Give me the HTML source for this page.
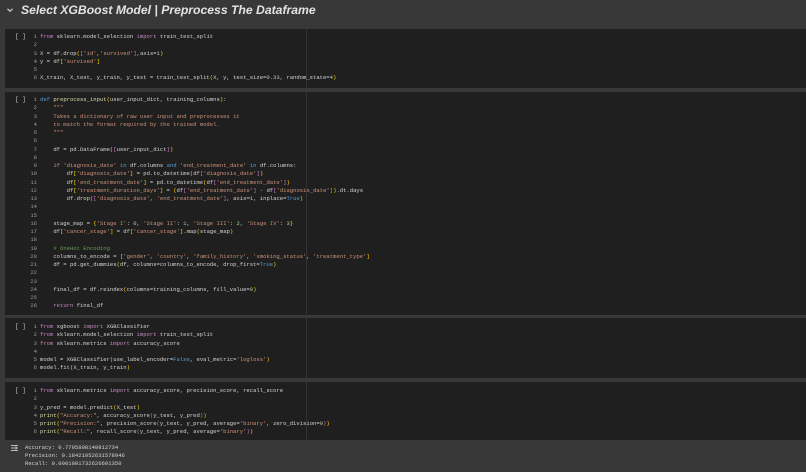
<!DOCTYPE html>
<html><head><meta charset="utf-8"><style>
html,body{margin:0;padding:0;width:806px;height:472px;overflow:hidden;background:#383838;}
body{position:relative;font-family:"Liberation Mono",monospace;}
.title{position:absolute;left:21px;top:3px;font:italic bold 12.2px "Liberation Sans",sans-serif;color:#e3e3e3;white-space:nowrap;}
.chev{position:absolute;left:6px;top:6px;}
.cell{position:absolute;left:5px;right:0;background:#1f1f1f;}
.br{position:absolute;left:10px;font-size:6px;color:#c8c8c8;font-family:"Liberation Mono",monospace;}
pre{position:absolute;left:0;margin:0;font-family:"Liberation Mono",monospace;font-size:5.55px;line-height:8.25px;color:#d4d4d4;white-space:pre;}
.ln{position:absolute;left:0;width:32px;text-align:right;color:#9a9a9a;margin:0;font-family:"Liberation Mono",monospace;font-size:5.55px;line-height:8.25px;white-space:pre;}
.code{left:35px;}
.ruler{position:absolute;left:301px;top:0;bottom:0;width:1px;background:#333;}
.k{color:#c586c0}.s{color:#ce9178}.n{color:#b5cea8}.d{color:#569cd6}.f{color:#dcdcaa}.c{color:#6a9955}.b{color:#ffd700}.p{color:#da70d6}.t{color:#569cd6}
.out{position:absolute;left:25px;top:444px;font-size:5.55px;line-height:8.2px;color:#d4d4d4;margin:0;}
</style></head><body>
<svg class="chev" width="8" height="8" viewBox="0 0 8 8"><path d="M1.5 2.8 L4 5.3 L6.5 2.8" stroke="#cfcfcf" stroke-width="1.2" fill="none"/></svg>
<div class="title">Select XGBoost Model | Preprocess The Dataframe</div>

<div class="cell" style="top:29px;height:59px;"><div class="ruler"></div>
<div class="br" style="top:4px">[ ]</div>
<pre class="ln" style="top:4px">1
2
3
4
5
6</pre>
<pre class="code" style="top:4px"><span class="k">from</span> sklearn.model_selection <span class="k">import</span> train_test_split

X = df.drop<span class="b">(</span><span class="p">[</span><span class="s">'id'</span>,<span class="s">'survived'</span><span class="p">]</span>,axis=<span class="n">1</span><span class="b">)</span>
y = df<span class="b">[</span><span class="s">'survived'</span><span class="b">]</span>

X_train, X_test, y_train, y_test = train_test_split<span class="b">(</span>X, y, test_size=<span class="n">0.33</span>, random_state=<span class="n">4</span><span class="b">)</span></pre></div>

<div class="cell" style="top:92px;height:223px;"><div class="ruler"></div>
<div class="br" style="top:4px">[ ]</div>
<pre class="ln" style="top:4px">1
2
3
4
5
6
7
8
9
10
11
12
13
14
15
16
17
18
19
20
21
22
23
24
25
26</pre>
<pre class="code" style="top:4px"><span class="d">def</span> <span class="f">preprocess_input</span><span class="b">(</span>user_input_dict, training_columns<span class="b">)</span>:
    <span class="s">"""</span>
<span class="s">    Takes a dictionary of raw user input and preprocesses it</span>
<span class="s">    to match the format required by the trained model.</span>
<span class="s">    """</span>

    df = pd.DataFrame<span class="b">(</span><span class="p">[</span>user_input_dict<span class="p">]</span><span class="b">)</span>

    <span class="k">if</span> <span class="s">'diagnosis_date'</span> <span class="d">in</span> df.columns <span class="d">and</span> <span class="s">'end_treatment_date'</span> <span class="d">in</span> df.columns:
        df<span class="b">[</span><span class="s">'diagnosis_date'</span><span class="b">]</span> = pd.to_datetime<span class="b">(</span>df<span class="p">[</span><span class="s">'diagnosis_date'</span><span class="p">]</span><span class="b">)</span>
        df<span class="b">[</span><span class="s">'end_treatment_date'</span><span class="b">]</span> = pd.to_datetime<span class="b">(</span>df<span class="p">[</span><span class="s">'end_treatment_date'</span><span class="p">]</span><span class="b">)</span>
        df<span class="b">[</span><span class="s">'treatment_duration_days'</span><span class="b">]</span> = <span class="b">(</span>df<span class="p">[</span><span class="s">'end_treatment_date'</span><span class="p">]</span> - df<span class="p">[</span><span class="s">'diagnosis_date'</span><span class="p">]</span><span class="b">)</span>.dt.days
        df.drop<span class="b">(</span><span class="p">[</span><span class="s">'diagnosis_date'</span>, <span class="s">'end_treatment_date'</span><span class="p">]</span>, axis=<span class="n">1</span>, inplace=<span class="t">True</span><span class="b">)</span>


    stage_map = <span class="b">{</span><span class="s">'Stage I'</span>: <span class="n">0</span>, <span class="s">'Stage II'</span>: <span class="n">1</span>, <span class="s">'Stage III'</span>: <span class="n">2</span>, <span class="s">'Stage IV'</span>: <span class="n">3</span><span class="b">}</span>
    df<span class="b">[</span><span class="s">'cancer_stage'</span><span class="b">]</span> = df<span class="b">[</span><span class="s">'cancer_stage'</span><span class="b">]</span>.map<span class="b">(</span>stage_map<span class="b">)</span>

    <span class="c"># OneHot Encoding</span>
    columns_to_encode = <span class="b">[</span><span class="s">'gender'</span>, <span class="s">'country'</span>, <span class="s">'family_history'</span>, <span class="s">'smoking_status'</span>, <span class="s">'treatment_type'</span><span class="b">]</span>
    df = pd.get_dummies<span class="b">(</span>df, columns=columns_to_encode, drop_first=<span class="t">True</span><span class="b">)</span>


    final_df = df.reindex<span class="b">(</span>columns=training_columns, fill_value=<span class="n">0</span><span class="b">)</span>

    <span class="k">return</span> final_df</pre></div>

<div class="cell" style="top:318px;height:60px;"><div class="ruler"></div>
<div class="br" style="top:5px">[ ]</div>
<pre class="ln" style="top:5px">1
2
3
4
5
6</pre>
<pre class="code" style="top:5px"><span class="k">from</span> xgboost <span class="k">import</span> XGBClassifier
<span class="k">from</span> sklearn.model_selection <span class="k">import</span> train_test_split
<span class="k">from</span> sklearn.metrics <span class="k">import</span> accuracy_score

model = XGBClassifier<span class="b">(</span>use_label_encoder=<span class="t">False</span>, eval_metric=<span class="s">'logloss'</span><span class="b">)</span>
model.fit<span class="b">(</span>X_train, y_train<span class="b">)</span></pre></div>

<div class="cell" style="top:382px;height:58px;"><div class="ruler"></div>
<div class="br" style="top:5px">[ ]</div>
<pre class="ln" style="top:5px">1
2
3
4
5
6</pre>
<pre class="code" style="top:5px"><span class="k">from</span> sklearn.metrics <span class="k">import</span> accuracy_score, precision_score, recall_score

y_pred = model.predict<span class="b">(</span>X_test<span class="b">)</span>
<span class="f">print</span><span class="b">(</span><span class="s">"Accuracy:"</span>, accuracy_score<span class="p">(</span>y_test, y_pred<span class="p">)</span><span class="b">)</span>
<span class="f">print</span><span class="b">(</span><span class="s">"Precision:"</span>, precision_score<span class="p">(</span>y_test, y_pred, average=<span class="s">'binary'</span>, zero_division=<span class="n">0</span><span class="p">)</span><span class="b">)</span>
<span class="f">print</span><span class="b">(</span><span class="s">"Recall:"</span>, recall_score<span class="p">(</span>y_test, y_pred, average=<span class="s">'binary'</span><span class="p">)</span><span class="b">)</span></pre></div>

<svg style="position:absolute;left:10px;top:444px" width="9" height="8" viewBox="0 0 9 8"><path d="M1 1.5H8M1 4H8M1 6.5H8" stroke="#bdbdbd" stroke-width="0.9"/><path d="M5.5 2.5 L7 4 L5.5 5.5" stroke="#bdbdbd" stroke-width="0.8" fill="none"/></svg>
<pre class="out">Accuracy: 0.7795800149812734
Precision: 0.18421052631578946
Recall: 0.0001001732626601350</pre>
</body></html>
